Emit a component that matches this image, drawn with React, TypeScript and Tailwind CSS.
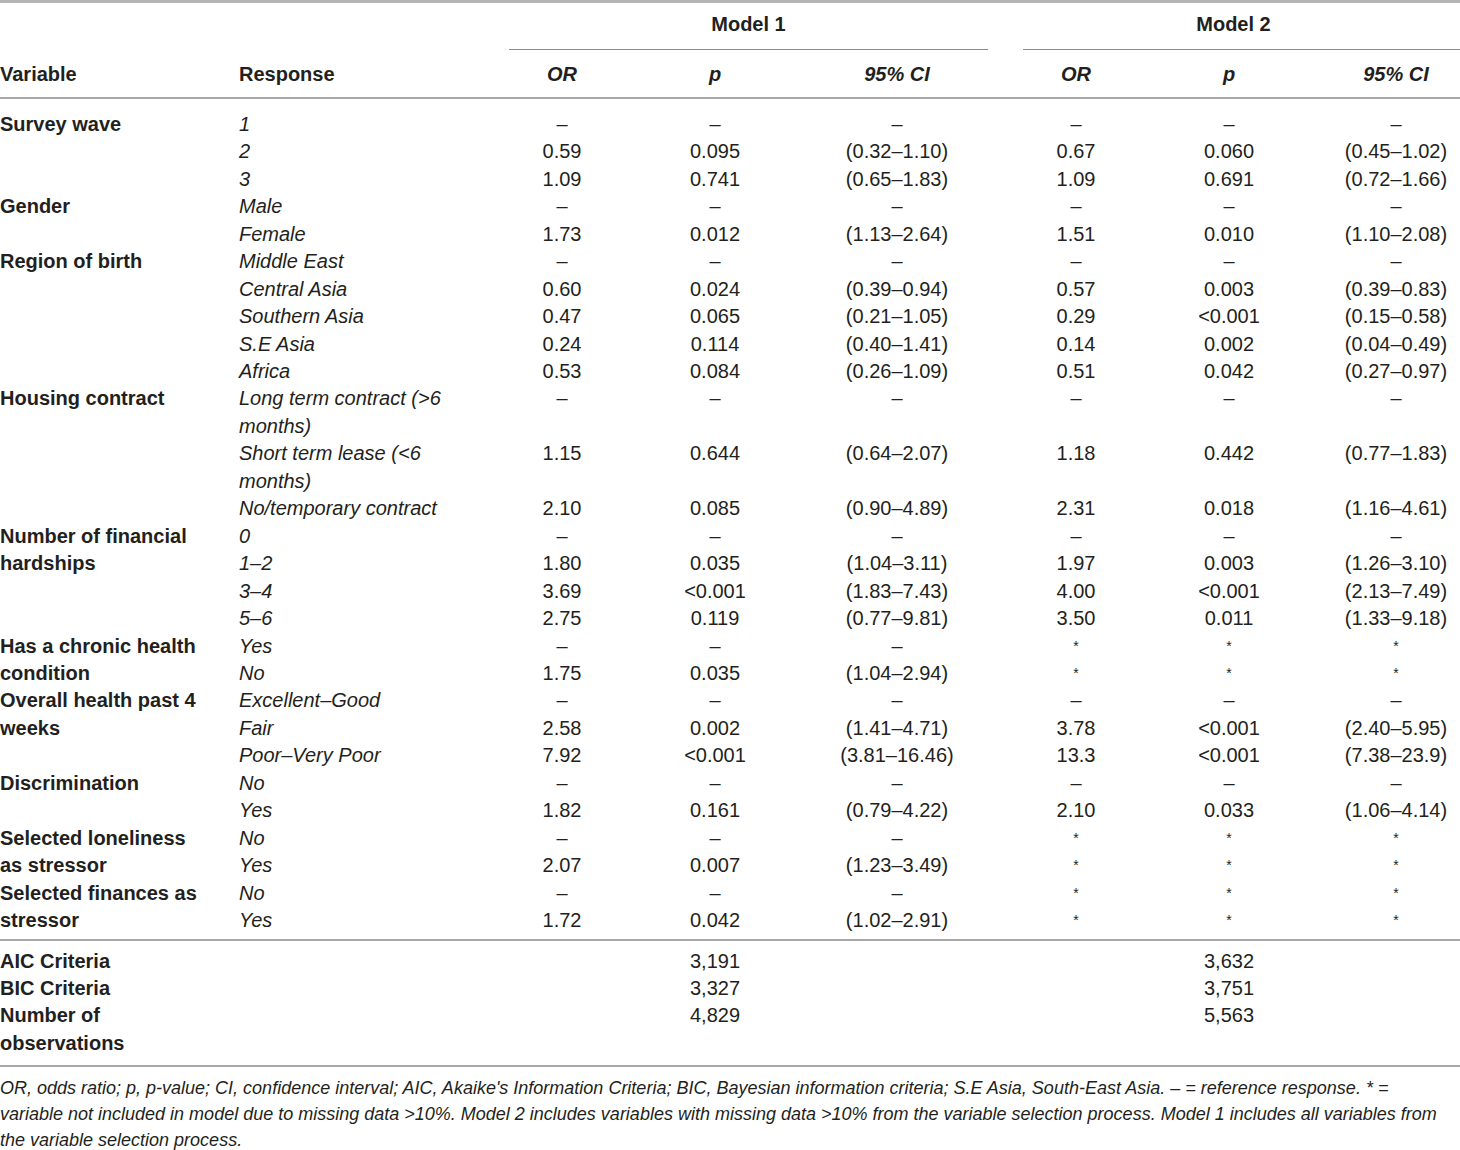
import React from 'react';

type Row = { resp: string; v: string[] };
type Group = { label: string; rows: Row[] };

const D = ['–', '–', '–', '–', '–', '–'];
const DS = ['–', '–', '–', '*', '*', '*'];

const groups: Group[] = [
  {
    label: 'Survey wave',
    rows: [
      { resp: '1', v: D },
      { resp: '2', v: ['0.59', '0.095', '(0.32–1.10)', '0.67', '0.060', '(0.45–1.02)'] },
      { resp: '3', v: ['1.09', '0.741', '(0.65–1.83)', '1.09', '0.691', '(0.72–1.66)'] },
    ],
  },
  {
    label: 'Gender',
    rows: [
      { resp: 'Male', v: D },
      { resp: 'Female', v: ['1.73', '0.012', '(1.13–2.64)', '1.51', '0.010', '(1.10–2.08)'] },
    ],
  },
  {
    label: 'Region of birth',
    rows: [
      { resp: 'Middle East', v: D },
      { resp: 'Central Asia', v: ['0.60', '0.024', '(0.39–0.94)', '0.57', '0.003', '(0.39–0.83)'] },
      { resp: 'Southern Asia', v: ['0.47', '0.065', '(0.21–1.05)', '0.29', '<0.001', '(0.15–0.58)'] },
      { resp: 'S.E Asia', v: ['0.24', '0.114', '(0.40–1.41)', '0.14', '0.002', '(0.04–0.49)'] },
      { resp: 'Africa', v: ['0.53', '0.084', '(0.26–1.09)', '0.51', '0.042', '(0.27–0.97)'] },
    ],
  },
  {
    label: 'Housing contract',
    rows: [
      { resp: 'Long term contract (>6 months)', v: D },
      { resp: 'Short term lease (<6 months)', v: ['1.15', '0.644', '(0.64–2.07)', '1.18', '0.442', '(0.77–1.83)'] },
      { resp: 'No/temporary contract', v: ['2.10', '0.085', '(0.90–4.89)', '2.31', '0.018', '(1.16–4.61)'] },
    ],
  },
  {
    label: 'Number of financial hardships',
    rows: [
      { resp: '0', v: D },
      { resp: '1–2', v: ['1.80', '0.035', '(1.04–3.11)', '1.97', '0.003', '(1.26–3.10)'] },
      { resp: '3–4', v: ['3.69', '<0.001', '(1.83–7.43)', '4.00', '<0.001', '(2.13–7.49)'] },
      { resp: '5–6', v: ['2.75', '0.119', '(0.77–9.81)', '3.50', '0.011', '(1.33–9.18)'] },
    ],
  },
  {
    label: 'Has a chronic health condition',
    rows: [
      { resp: 'Yes', v: DS },
      { resp: 'No', v: ['1.75', '0.035', '(1.04–2.94)', '*', '*', '*'] },
    ],
  },
  {
    label: 'Overall health past 4 weeks',
    rows: [
      { resp: 'Excellent–Good', v: D },
      { resp: 'Fair', v: ['2.58', '0.002', '(1.41–4.71)', '3.78', '<0.001', '(2.40–5.95)'] },
      { resp: 'Poor–Very Poor', v: ['7.92', '<0.001', '(3.81–16.46)', '13.3', '<0.001', '(7.38–23.9)'] },
    ],
  },
  {
    label: 'Discrimination',
    rows: [
      { resp: 'No', v: D },
      { resp: 'Yes', v: ['1.82', '0.161', '(0.79–4.22)', '2.10', '0.033', '(1.06–4.14)'] },
    ],
  },
  {
    label: 'Selected loneliness as stressor',
    rows: [
      { resp: 'No', v: DS },
      { resp: 'Yes', v: ['2.07', '0.007', '(1.23–3.49)', '*', '*', '*'] },
    ],
  },
  {
    label: 'Selected finances as stressor',
    rows: [
      { resp: 'No', v: DS },
      { resp: 'Yes', v: ['1.72', '0.042', '(1.02–2.91)', '*', '*', '*'] },
    ],
  },
];

const fits = [
  { label: 'AIC Criteria', m1: '3,191', m2: '3,632' },
  { label: 'BIC Criteria', m1: '3,327', m2: '3,751' },
  { label: 'Number of observations', m1: '4,829', m2: '5,563' },
];

// value column classes (OR, p, CI for each model), all centred
const valCols = ['', '', '', '', '', 'pl-[35px]'];

const sub = 'grid grid-cols-[266px_130px_176px_188px_170px_136px_163px]';

export default function App() {
  return (
    <div
      className="w-[1460px] bg-white text-[#231f20] text-[20px] leading-[27.45px]"
      style={{ fontFamily: '"Liberation Sans", Arial, sans-serif' }}
    >
      {/* Header */}
      <div className="border-t-[3px] border-[#b5b5b5] border-b-2 border-b-[#a8a8a8]">
        <div className="grid grid-cols-[231px_266px_130px_176px_188px_170px_136px_163px]">
          <div className="col-span-2" />
          <div className="col-span-3 ml-[12px] mr-[3px] pt-[8px] pb-[11px] border-b border-[#8c8c8c] text-center font-bold">
            Model 1
          </div>
          <div className="col-span-3 ml-[32px] pt-[8px] pb-[11px] pr-[16px] border-b border-[#8c8c8c] text-center font-bold">
            Model 2
          </div>
          <div className="pt-[11px] pb-[8px] font-bold">Variable</div>
          <div className="pt-[11px] pb-[8px] pl-[8px] font-bold">Response</div>
          <div className="pt-[11px] pb-[8px] text-center font-bold italic">OR</div>
          <div className="pt-[11px] pb-[8px] text-center font-bold italic">p</div>
          <div className="pt-[11px] pb-[8px] text-center font-bold italic">95% CI</div>
          <div className="pt-[11px] pb-[8px] text-center font-bold italic">OR</div>
          <div className="pt-[11px] pb-[8px] text-center font-bold italic">p</div>
          <div className="pt-[11px] pb-[8px] pl-[35px] text-center font-bold italic">95% CI</div>
        </div>
      </div>

      {/* Body */}
      <div className="pt-[12px] pb-[4px] border-b-2 border-[#a8a8a8]">
        {groups.map((g) => (
          <div key={g.label} className="flex">
            <div className="w-[231px] shrink-0 pr-[23px] font-bold">{g.label}</div>
            <div className="flex-1">
              {g.rows.map((r, i) => (
                <div key={i} className={sub}>
                  <div className="pl-[8px] pr-[16px] italic">{r.resp}</div>
                  {r.v.map((x, j) => (
                    <div key={j} className={`text-center ${valCols[j]} ${x === '*' ? 'text-[14px]' : ''}`}>
                      {x}
                    </div>
                  ))}
                </div>
              ))}
            </div>
          </div>
        ))}
      </div>

      {/* Model fit */}
      <div className="pt-[7px] pb-[8px] border-b-2 border-[#a8a8a8]">
        {fits.map((f) => (
          <div key={f.label} className="flex">
            <div className="w-[231px] shrink-0 pr-[23px] font-bold">{f.label}</div>
            <div className={`flex-1 ${sub}`}>
              <div />
              <div />
              <div className="text-center">{f.m1}</div>
              <div />
              <div />
              <div className="text-center">{f.m2}</div>
              <div />
            </div>
          </div>
        ))}
      </div>

      {/* Footnote */}
      <p className="pt-[8px] pb-[10px] text-[18px] leading-[26px] italic">
        OR, odds ratio; p, p-value; CI, confidence interval; AIC, Akaike's Information Criteria; BIC, Bayesian
        information criteria; S.E Asia, South-East Asia. – = reference response. * =
        <br />
        variable not included in model due to missing data &gt;10%. Model 2 includes variables with missing data
        &gt;10% from the variable selection process. Model 1 includes all variables from
        <br />
        the variable selection process.
      </p>
    </div>
  );
}
